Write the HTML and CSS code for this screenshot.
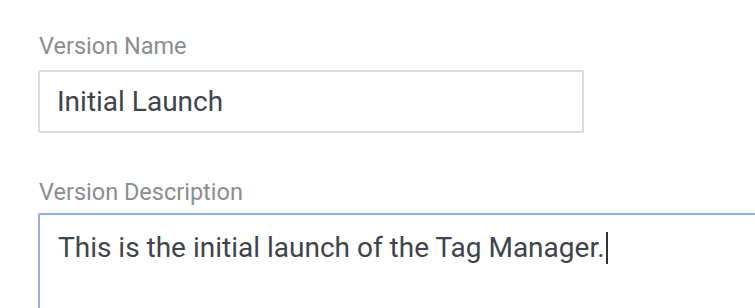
FILE: index.html
```
<!DOCTYPE html>
<html>
<head>
<meta charset="utf-8">
<link rel="stylesheet" href="styles.css">
</head>
<body>
<div class="form">
  <div class="field">
    <div class="label">Version Name</div>
    <div class="input">Initial Launch</div>
  </div>
  <div class="field field-desc">
    <div class="label">Version Description</div>
    <div class="textarea">This is the initial launch of the Tag Manager.<span class="caret"></span></div>
  </div>
</div>
</body>
</html>
```
FILE: styles.css
```
html, body {
  margin: 0;
  padding: 0;
  background: #ffffff;
  width: 755px;
  height: 308px;
  overflow: hidden;
}
.form {
  padding: 33px 0 0 38px;
  font-family: Roboto, "Liberation Sans", sans-serif;
}
.label {
  font-size: 23.5px;
  line-height: 27px;
  color: #8b8d90;
  margin-left: 1px;
}
.input {
  margin-top: 10px;
  width: 546px;
  height: 63px;
  box-sizing: border-box;
  border: 2px solid #dcdcdc;
  border-radius: 2px;
  padding: 0 0 0 17px;
  font-size: 28px;
  line-height: 60px;
  color: #40444a;
}
.field-desc {
  margin-top: 46px;
}
.field-desc .label {
  margin-bottom: 7px;
}
.textarea {
  height: 95px;
  box-sizing: border-box;
  border: 2px solid #91b1e3;
  border-right: none;
  border-bottom: none;
  border-radius: 2px 0 0 0;
  padding: 13px 0 0 18px;
  font-size: 28px;
  line-height: 40px;
  color: #40444a;
}
.caret {
  display: inline-block;
  width: 2px;
  height: 32px;
  background: #333;
  vertical-align: -7px;
  margin-left: 1px;
}
```
